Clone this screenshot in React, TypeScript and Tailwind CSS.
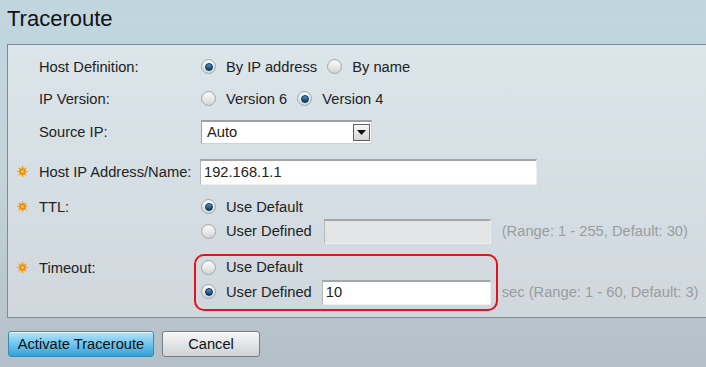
import React from 'react';

const font = { fontFamily: '"Liberation Sans", Arial, sans-serif' };

const Radio = ({ checked }: { checked?: boolean }) => (
  <span className="relative inline-block w-[15px] h-[15px] shrink-0 rounded-full border border-[#a3a8ab] bg-gradient-to-b from-[#ffffff] to-[#d2d4d6] shadow-[inset_0_1px_1px_rgba(0,0,0,0.08)]">
    {checked && (
      <span className="absolute left-[2.5px] top-[2.5px] w-[8px] h-[8px] rounded-full bg-gradient-to-b from-[#4b9bd0] to-[#0b3b5e] border border-[#0a2d47]" />
    )}
  </span>
);

const Star = () => (
  <svg width="11" height="11" viewBox="0 0 11 11">
    <g stroke="#f5a623" strokeWidth="1.6" strokeLinecap="round">
      <line x1="5.5" y1="0.8" x2="5.5" y2="10.2" />
      <line x1="0.8" y1="5.5" x2="10.2" y2="5.5" />
      <line x1="2.2" y1="2.2" x2="8.8" y2="8.8" />
      <line x1="8.8" y1="2.2" x2="2.2" y2="8.8" />
    </g>
    <circle cx="5.5" cy="5.5" r="3.2" fill="#f08a12" />
    <circle cx="5.5" cy="5.5" r="1.6" fill="#ffc24a" />
  </svg>
);

const Label = ({ text, required }: { text: string; required?: boolean }) => (
  <div className="flex items-center w-[184px] shrink-0">
    <span className="w-[22px] flex items-center">{required && <Star />}</span>
    <span>{text}</span>
  </div>
);

const Option = ({ text, checked }: { text: string; checked?: boolean }) => (
  <span className="flex items-center">
    <Radio checked={checked} />
    <span className="ml-[10px]">{text}</span>
  </span>
);

const TextBox = ({ value, disabled, className }: { value?: string; disabled?: boolean; className: string }) => (
  <div
    className={`flex items-center pl-[3px] border-t-2 border-l border-t-[#a4a6a8] border-l-[#b5b7b9] border-r border-b border-r-[#eceeef] border-b-[#eceeef] ${disabled ? 'bg-[#e3e4e5]' : 'bg-white'} ${className}`}
  >
    {value}
  </div>
);

export default function App() {
  return (
    <div
      style={font}
      className="w-[706px] h-[367px] overflow-hidden bg-gradient-to-b from-[#c0d6df] via-[#c6d2d9] to-[#b3c0c8] text-[14.7px] text-[#222]"
    >
      <div className="h-[44px] pl-[7px] pt-[6px] text-[22px] leading-[26px] text-[#111]">Traceroute</div>

      <div className="ml-[7px] w-[720px] border-t border-l border-b border-[#7c8d96] bg-gradient-to-b from-[#dbe5ea] to-[#d0d8de] pt-[6px] pb-[6px] pl-[9px]">
        <div className="flex items-center h-[32px]">
          <Label text="Host Definition:" />
          <div className="flex items-center gap-[10px]">
            <Option text="By IP address" checked />
            <Option text="By name" />
          </div>
        </div>

        <div className="flex items-center h-[32px]">
          <Label text="IP Version:" />
          <div className="flex items-center gap-[10px]">
            <Option text="Version 6" />
            <Option text="Version 4" checked />
          </div>
        </div>

        <div className="flex items-center h-[34px]">
          <Label text="Source IP:" />
          <div className="flex items-center justify-between w-[171px] h-[24px] bg-white border border-t-2 border-[#9fa2a4] border-r-[#cfd1d3] border-b-[#cfd1d3] pl-[5px] pr-[1px]">
            <span>Auto</span>
            <span className="flex items-center justify-center w-[17px] h-[17px] border border-[#5d5f61] bg-gradient-to-b from-[#f7f7f7] to-[#d5d6d7]">
              <svg width="9" height="5" viewBox="0 0 9 5">
                <path d="M0 0 L9 0 L4.5 5 Z" fill="#111" />
              </svg>
            </span>
          </div>
        </div>

        <div className="flex items-center h-[46px]">
          <Label text="Host IP Address/Name:" required />
          <TextBox value="192.168.1.1" className="w-[337px] h-[26px] -ml-[1px]" />
        </div>

        <div className="flex">
          <div className="h-[24px] flex items-center">
            <Label text="TTL:" required />
          </div>
          <div className="flex flex-col">
            <div className="h-[24px] flex items-center">
              <Option text="Use Default" checked />
            </div>
            <div className="h-[25px] flex items-center">
              <Option text="User Defined" />
              <TextBox disabled className="w-[167px] h-[25px] ml-[12px]" />
              <span className="ml-[11px] text-[#9a9c9e]">(Range: 1 - 255, Default: 30)</span>
            </div>
          </div>
        </div>

        <div className="flex mt-[10px]">
          <div className="h-[26px] pt-[2px] flex items-center">
            <Label text="Timeout:" required />
          </div>
          <div className="flex items-center">
            <div className="-ml-[7px] border-2 border-[#e3121b] rounded-[10px] pl-[5px] pr-[5px] pb-[3px]">
              <div className="h-[22px] flex items-center">
                <Option text="Use Default" />
              </div>
              <div className="h-[28px] flex items-center">
                <Option text="User Defined" checked />
                <TextBox value="10" className="w-[169px] h-[25px] ml-[10px]" />
              </div>
            </div>
            <span className="ml-[4px] mt-[20px] text-[#9a9c9e]">sec (Range: 1 - 60, Default: 3)</span>
          </div>
        </div>
      </div>

      <div className="flex items-center gap-[8px] pl-[8px] pt-[13px]">
        <button className="w-[146px] h-[26px] rounded-[3px] border border-[#3f8ab5] bg-gradient-to-b from-[#b7e5fa] via-[#6cc5ee] to-[#2ea2d8] text-[#111] text-[14.7px] shadow-[inset_0_1px_0_rgba(255,255,255,0.7)]">
          Activate Traceroute
        </button>
        <button className="w-[98px] h-[26px] rounded-[3px] border border-[#7a7d80] bg-gradient-to-b from-[#f6f7f8] to-[#cfd3d6] text-[#111] text-[14.7px] shadow-[inset_0_1px_0_rgba(255,255,255,0.8)]">
          Cancel
        </button>
      </div>
    </div>
  );
}
